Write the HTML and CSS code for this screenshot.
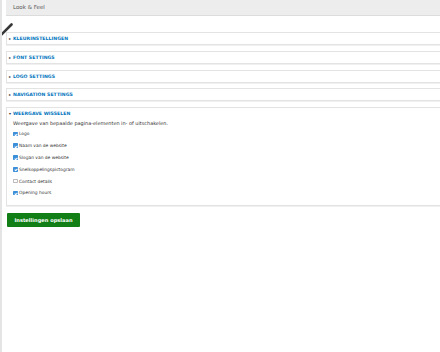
FILE: index.html
```html
<!DOCTYPE html>
<html lang="nl">
<head>
    <meta charset="UTF-8">
    <meta name="viewport" content="width=device-width, initial-scale=1.0">
    <title>Look &amp; Feel</title>
    <link rel="stylesheet" href="styles.css">
</head>
<body>
    <div class="page">
        <div class="header">Look &amp; Feel</div>

        <svg class="edit-handle" width="14" height="14" viewBox="0 0 14 14">
            <line x1="0.5" y1="12.5" x2="11.5" y2="1.5" stroke="#383838" stroke-width="2.6" stroke-linecap="round"/>
        </svg>

        <form class="settings">
            <div class="section">
                <div class="section-title"><span class="arrow">&#9656;</span>KLEURINSTELLINGEN</div>
            </div>
            <div class="section">
                <div class="section-title"><span class="arrow">&#9656;</span>FONT SETTINGS</div>
            </div>
            <div class="section">
                <div class="section-title"><span class="arrow">&#9656;</span>LOGO SETTINGS</div>
            </div>
            <div class="section">
                <div class="section-title"><span class="arrow">&#9656;</span>NAVIGATION SETTINGS</div>
            </div>
            <div class="section open">
                <div class="section-title"><span class="arrow">&#9662;</span>WEERGAVE WISSELEN</div>
                <div class="section-body">
                    <p class="description">Weergave van bepaalde pagina-elementen in- of uitschakelen.</p>
                    <label class="check"><span class="box checked"></span>Logo</label>
                    <label class="check"><span class="box checked"></span>Naam van de website</label>
                    <label class="check"><span class="box checked"></span>Slogan van de website</label>
                    <label class="check"><span class="box checked"></span>Snelkoppelingspictogram</label>
                    <label class="check"><span class="box"></span>Contact details</label>
                    <label class="check"><span class="box checked"></span>Opening hours</label>
                </div>
            </div>

            <button type="submit" class="save-btn">Instellingen opslaan</button>
        </form>
    </div>
</body>
</html>
```

FILE: styles.css
```css
* {
    margin: 0;
    padding: 0;
    box-sizing: border-box;
    font-family: 'DejaVu Sans', Verdana, sans-serif;
}
body {
    background-color: #fff;
    color: #333;
}
.page {
    position: relative;
    min-height: 352px;
    border-left: 2px solid #e4e4e4;
    padding-left: 4px;
    overflow: hidden;
}
.header {
    height: 16px;
    line-height: 15px;
    background-color: #ededed;
    border-bottom: 1px solid #dcdcdc;
    padding-left: 7px;
    font-size: 5.5px;
    color: #555;
}
.edit-handle {
    position: absolute;
    left: -2px;
    top: 23px;
}
.settings {
    padding-top: 16px;
}
.section {
    margin-right: -4px;
    margin-bottom: 5.75px;
    border: 1px solid #e3e3e3;
    box-shadow: 0 1px 0 #f0f0f0;
    background-color: #fff;
}
.section-title {
    height: 11px;
    line-height: 11px;
    padding-left: 2px;
    font-size: 4.6px;
    font-weight: bold;
    color: #0074bd;
    letter-spacing: 0.05px;
}
.arrow {
    display: inline-block;
    width: 4px;
    font-size: 4px;
    color: #333;
}
.open .section-title {
    height: 12px;
    line-height: 12px;
}
.section-body {
    padding: 0 6px 6px;
}
.description {
    font-size: 4.95px;
    line-height: 7px;
    color: #333;
    margin-bottom: 1px;
}
.check {
    display: flex;
    align-items: center;
    height: 11.8px;
    font-size: 4.4px;
    color: #333;
}
.box {
    width: 4.5px;
    height: 4.5px;
    margin-right: 1.5px;
    border: 0.6px solid #bbb;
    border-radius: 0.8px;
    background-color: #fff;
    position: relative;
}
.box.checked {
    background-color: #3b8fd9;
    border-color: #3b8fd9;
}
.box.checked::after {
    content: "";
    position: absolute;
    left: 1.3px;
    top: 0.3px;
    width: 1px;
    height: 2.2px;
    border: solid #fff;
    border-width: 0 0.6px 0.6px 0;
    transform: rotate(45deg);
}
.save-btn {
    display: block;
    margin-top: 7px;
    margin-left: 1px;
    width: 73px;
    height: 14px;
    background-color: #127f16;
    color: #fff;
    border: none;
    border-radius: 1px;
    font-size: 5.1px;
    font-weight: bold;
    cursor: pointer;
}
.save-btn:hover {
    background-color: #0d6b10;
}
```
